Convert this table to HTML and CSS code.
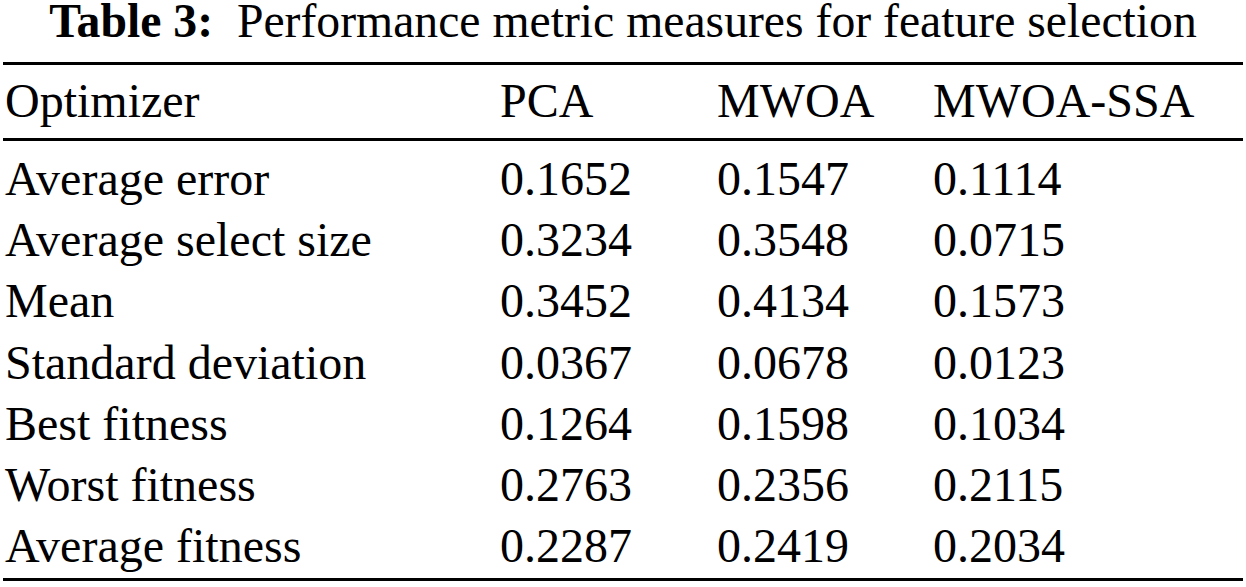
FILE: index.html
```html
<!DOCTYPE html>
<html>
<head>
<meta charset="utf-8">
<link rel="stylesheet" href="styles.css">
</head>
<body>
<div class="page">
  <div class="caption"><span class="label">Table 3:</span>&ensp;Performance metric measures for feature selection</div>
  <div class="tbl">
    <div class="row head">
      <div class="cell first">Optimizer</div><div class="cell">PCA</div><div class="cell">MWOA</div><div class="cell">MWOA-SSA</div>
    </div>
    <div class="body">
      <div class="row"><div class="cell first">Average error</div><div class="cell">0.1652</div><div class="cell">0.1547</div><div class="cell">0.1114</div></div>
      <div class="row"><div class="cell first">Average select size</div><div class="cell">0.3234</div><div class="cell">0.3548</div><div class="cell">0.0715</div></div>
      <div class="row"><div class="cell first">Mean</div><div class="cell">0.3452</div><div class="cell">0.4134</div><div class="cell">0.1573</div></div>
      <div class="row"><div class="cell first">Standard deviation</div><div class="cell">0.0367</div><div class="cell">0.0678</div><div class="cell">0.0123</div></div>
      <div class="row"><div class="cell first">Best fitness</div><div class="cell">0.1264</div><div class="cell">0.1598</div><div class="cell">0.1034</div></div>
      <div class="row"><div class="cell first">Worst fitness</div><div class="cell">0.2763</div><div class="cell">0.2356</div><div class="cell">0.2115</div></div>
      <div class="row"><div class="cell first">Average fitness</div><div class="cell">0.2287</div><div class="cell">0.2419</div><div class="cell">0.2034</div></div>
    </div>
  </div>
</div>
</body>
</html>
```

FILE: styles.css
```css
html, body {
  margin: 0;
  padding: 0;
  background: #ffffff;
}
body {
  color: #000000;
  font-family: "Liberation Serif", "Times New Roman", serif;
}
.page {
  width: 1240px;
  padding: 0 3px;
}
.caption {
  height: 62px;
  text-align: center;
  font-size: 47.7px;
  line-height: 42px;
  white-space: nowrap;
}
.caption .label {
  font-weight: bold;
}
.tbl {
  border-top: 3px solid #000;
  border-bottom: 3px solid #000;
}
.row {
  display: grid;
  grid-template-columns: 497px 217px 216px 1fr;
  font-size: 48px;
  line-height: 61.2px;
  white-space: nowrap;
}
.head {
  padding: 5px 0 6.3px;
  border-bottom: 3px solid #000;
}
.body {
  padding: 7.5px 0 1.5px;
}
.cell.first {
  padding-left: 2px;
}
```
